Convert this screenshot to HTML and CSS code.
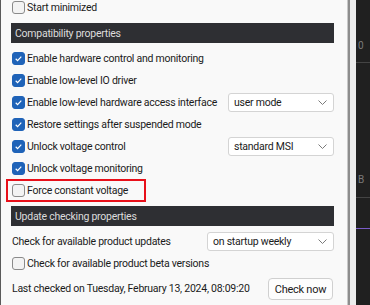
FILE: index.html
```html
<!DOCTYPE html>
<html lang="en">
<head>
    <meta charset="UTF-8">
    <title>Settings</title>
    <link rel="stylesheet" href="styles.css">
</head>
<body>
    <div class="screen">
        <div class="settings">
            <div class="rows">
                <div class="row"><span class="check"></span>Start minimized</div>

                <div class="group-title">Compatibility properties</div>
                <div class="row"><span class="check on"><svg viewBox="0 0 13 13"><path d="M3.2 6.8l2.2 2.2 4.4-4.8"/></svg></span>Enable hardware control and monitoring</div>
                <div class="row"><span class="check on"><svg viewBox="0 0 13 13"><path d="M3.2 6.8l2.2 2.2 4.4-4.8"/></svg></span>Enable low-level IO driver</div>
                <div class="row"><span class="check on"><svg viewBox="0 0 13 13"><path d="M3.2 6.8l2.2 2.2 4.4-4.8"/></svg></span>Enable low-level hardware access interface
                    <div class="select narrow">user mode<svg class="chev" viewBox="0 0 9 5"><path d="M0.5 0.5l4 4 4-4"/></svg></div>
                </div>
                <div class="row"><span class="check on"><svg viewBox="0 0 13 13"><path d="M3.2 6.8l2.2 2.2 4.4-4.8"/></svg></span>Restore settings after suspended mode</div>
                <div class="row"><span class="check on"><svg viewBox="0 0 13 13"><path d="M3.2 6.8l2.2 2.2 4.4-4.8"/></svg></span>Unlock voltage control
                    <div class="select narrow">standard MSI<svg class="chev" viewBox="0 0 9 5"><path d="M0.5 0.5l4 4 4-4"/></svg></div>
                </div>
                <div class="row"><span class="check on"><svg viewBox="0 0 13 13"><path d="M3.2 6.8l2.2 2.2 4.4-4.8"/></svg></span>Unlock voltage monitoring</div>
                <div class="row highlighted"><span class="check"></span>Force constant voltage<span class="mark"></span></div>

                <div class="group-title">Update checking properties</div>
                <div class="row first">Check for available product updates
                    <div class="select wide">on startup weekly<svg class="chev" viewBox="0 0 9 5"><path d="M0.5 0.5l4 4 4-4"/></svg></div>
                </div>
                <div class="row"><span class="check"></span>Check for available product beta versions</div>
                <div class="row tall">Last checked on Tuesday, February 13, 2024, 08:09:20
                    <button class="btn">Check now</button>
                </div>
            </div>
        </div>
        <div class="divider"></div>
        <div class="gutter"></div>
        <div class="backdrop">
            <div class="bd-text t1">0</div>
            <div class="bd-line l1"></div>
            <div class="bd-text t2">B</div>
            <div class="bd-line l2"></div>
            <div class="bd-accent"></div>
        </div>
    </div>
</body>
</html>
```

FILE: styles.css
```css
* {
    box-sizing: border-box;
    margin: 0;
    padding: 0;
}
body {
    width: 370px;
    height: 305px;
    overflow: hidden;
    background-color: #1c1c1c;
    font-family: Roboto, 'Liberation Sans', sans-serif;
    font-size: 10.5px;
    letter-spacing: -0.25px;
    color: #1b1b1b;
}
.screen {
    display: flex;
    height: 305px;
}
.settings {
    width: 347px;
    background-color: #f9f9f9;
    border-left: 1px solid #5a5a5a;
    padding: 0 13px 0 11px;
    overflow: hidden;
}
.rows {
    display: flex;
    flex-direction: column;
    margin-top: -4px;
}
.row {
    height: 22px;
    display: flex;
    align-items: center;
    position: relative;
    white-space: nowrap;
}
.row.first {
    margin-top: 13px;
}
.row.tall {
    margin-top: 3px;
}
.group-title {
    height: 20px;
    margin: 5px 0 4px -1px;
    padding-left: 4px;
    display: flex;
    align-items: center;
    background-color: #2e2f33;
    color: #dcdcdc;
}
.group-title + .row {
    margin-top: 0;
}
.check {
    width: 13px;
    height: 13px;
    margin-right: 2px;
    border: 1px solid #8a8a8a;
    border-radius: 3px;
    background-color: #f3f3f3;
    flex-shrink: 0;
    display: flex;
}
.check.on {
    background-color: #1f63b8;
    border-color: #1f63b8;
}
.check svg {
    width: 11px;
    height: 11px;
    fill: none;
    stroke: #fff;
    stroke-width: 1.4;
}
.select {
    margin-left: auto;
    height: 19px;
    padding: 0 6px 0 5px;
    display: flex;
    align-items: center;
    justify-content: space-between;
    background-color: #fff;
    border: 1px solid #d4d4d4;
    border-radius: 3px;
}
.select.narrow {
    width: 106px;
}
.select.wide {
    width: 127px;
}
.chev {
    width: 9px;
    height: 5px;
    fill: none;
    stroke: #7a7a7a;
    stroke-width: 1;
}
.btn {
    margin-left: auto;
    margin-right: 1px;
    width: 65px;
    height: 22px;
    margin-top: 2px;
    font-family: inherit;
    font-size: 11px;
    letter-spacing: -0.25px;
    color: #1b1b1b;
    background-color: #fdfdfd;
    border: 1px solid #d0d0d0;
    border-radius: 4px;
}
.mark {
    position: absolute;
    left: -6px;
    top: 0;
    width: 140px;
    height: 23px;
    border: 2px solid #e8101a;
}
.divider {
    width: 3px;
    background-color: #8d8d8d;
    border-left: 1px solid #c8c8c8;
}
.gutter {
    width: 6px;
    background-color: #ececec;
}
.backdrop {
    flex: 1;
    position: relative;
    background-color: #202020;
}
.bd-text {
    position: absolute;
    left: 2px;
    color: #7a7a7a;
    font-size: 10px;
}
.t1 { top: 40px; }
.t2 { top: 174px; }
.bd-line {
    position: absolute;
    left: 0;
    right: 0;
    height: 1px;
    background-color: #444;
}
.l1 { top: 62px; }
.l2 { top: 197px; }
.bd-accent {
    position: absolute;
    left: 0;
    right: 0;
    top: 228px;
    height: 1px;
    background-color: #7a5cc8;
}
```
